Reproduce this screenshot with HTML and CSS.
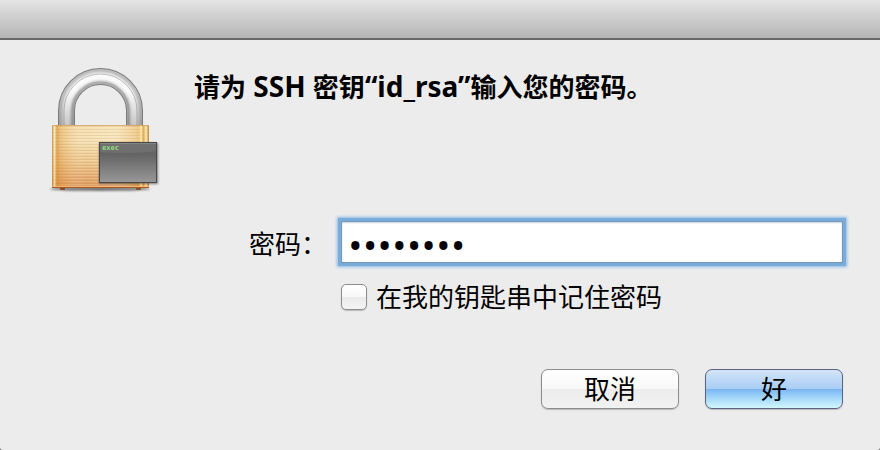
FILE: index.html
```html
<!DOCTYPE html>
<html lang="zh-CN">
<head>
<meta charset="utf-8">
<meta name="viewport" content="width=device-width, initial-scale=1">
<title>SSH 密钥</title>
<link rel="stylesheet" href="styles.css">
</head>
<body>
<main class="dialog">
  <header class="titlebar"></header>
  <form class="content">
    <svg class="lock" viewBox="0 0 130 140" aria-hidden="true">
      <defs>
        <linearGradient id="brass" x1="0" y1="0" x2="0" y2="1">
          <stop offset="0" stop-color="#f5dfae"/>
          <stop offset=".25" stop-color="#f4dfaf"/>
          <stop offset=".6" stop-color="#ecc083"/>
          <stop offset="1" stop-color="#d98b49"/>
        </linearGradient>
        <linearGradient id="edges">
          <stop offset="0" stop-color="#b97020" stop-opacity=".7"/>
          <stop offset=".025" stop-color="#fff0c0" stop-opacity=".7"/>
          <stop offset=".05" stop-color="#d38a35" stop-opacity=".65"/>
          <stop offset=".09" stop-color="#e09b47" stop-opacity=".4"/>
          <stop offset=".35" stop-color="#fff" stop-opacity=".08"/>
          <stop offset=".65" stop-color="#fff" stop-opacity=".2"/>
          <stop offset=".89" stop-color="#e5a348" stop-opacity=".35"/>
          <stop offset=".92" stop-color="#fff3bd" stop-opacity=".9"/>
          <stop offset=".94" stop-color="#d99336" stop-opacity=".7"/>
          <stop offset=".97" stop-color="#fff0b5" stop-opacity=".9"/>
          <stop offset="1" stop-color="#b86c23" stop-opacity=".8"/>
        </linearGradient>
        <linearGradient id="screen" x1="0" y1="0" x2="0" y2="1">
          <stop offset="0" stop-color="#686868"/>
          <stop offset=".3" stop-color="#646464"/>
          <stop offset="1" stop-color="#989898"/>
        </linearGradient>
        <linearGradient id="legs" x1="0" y1="0" x2="0" y2="1">
          <stop offset=".3" stop-color="#666" stop-opacity="0"/>
          <stop offset="1" stop-color="#666" stop-opacity=".35"/>
        </linearGradient>
        <pattern id="brushed" width="4" height="3" patternUnits="userSpaceOnUse">
          <path d="M0 .5H4" stroke="#ad6a20" stroke-opacity=".17"/>
          <path d="M0 1.5H4" stroke="#fff4cb" stroke-opacity=".2"/>
        </pattern>
        <filter id="soft" x="-20%" y="-200%" width="140%" height="500%"><feGaussianBlur stdDeviation="1.2"/></filter>
        <filter id="smooth"><feGaussianBlur stdDeviation="1"/></filter>
      </defs>
      <ellipse cx="60" cy="129" rx="50" ry="2" fill="#555" opacity=".8" filter="url(#soft)"/>
      <g fill="none">
        <path d="M26.500 66V50.500A34 34 0 0 1 94.500 50.500V66" stroke="#7d7d7d" stroke-width="17"/>
        <path d="M26.500 66V50.500A34 34 0 0 1 94.500 50.500V66" stroke="#bdbdbd" stroke-width="15"/>
        <path d="M26.500 66V50.500A34 34 0 0 1 94.500 50.500V66" stroke="#fafafa" stroke-width="8" filter="url(#smooth)"/>
        <path d="M24 65V50.500A36.500 36.500 0 0 1 97 50.500V65" stroke="#999" opacity=".6"/>
        <path d="M32.500 65V50.500A28 28 0 0 1 88.500 50.500V65" stroke="#9c9c9c" stroke-width="2" opacity=".6"/>
        <path d="M26.500 66V50.500A34 34 0 0 1 94.500 50.500V66" stroke="url(#legs)" stroke-width="16"/>
      </g>
      <rect x="20" y="127" width="5" height="3" rx="1" fill="#8c4d20"/>
      <rect x="96" y="127" width="5" height="3" rx="1" fill="#8c4d20"/>
      <rect x="12" y="65" width="97" height="63" rx="1" fill="url(#brass)"/>
      <rect x="12" y="65" width="97" height="63" fill="url(#brushed)"/>
      <rect x="12" y="65" width="97" height="63" rx="1" fill="url(#edges)"/>
      <path d="M13 65.500H108" stroke="#c8904a" opacity=".6"/>
      <path d="M12 126.500H109" stroke="#ffc079" opacity=".8"/>
      <path d="M12 127.500H109" stroke="#9c5826"/>
      <rect x="59" y="83" width="59" height="41" fill="#333" opacity=".6" filter="url(#smooth)"/>
      <rect x="59.500" y="82.500" width="57" height="40" fill="url(#screen)" stroke="#484848"/>
      <path d="M60 83H116V91Q88 95 60 92Z" fill="#888" opacity=".28"/>
      <path d="M60 83.500H116" stroke="#858585"/>
      <text class="lock-text" x="62" y="90">exec</text>
    </svg>
    <h1 class="message">请为<span class="latin"> SSH </span>密钥<span class="latin">“id_rsa”</span>输入您的密码。</h1>
    <label class="password-label" for="password">密码：</label>
    <input class="password" id="password" type="password" value="password" autocomplete="off">
    <div class="remember">
      <input class="checkbox" id="remember" type="checkbox">
      <label for="remember">在我的钥匙串中记住密码</label>
    </div>
    <div class="actions">
      <button class="button" type="button">取消</button>
      <button class="button primary" type="submit">好</button>
    </div>
  </form>
</main>
</body>
</html>
```
FILE: styles.css
```css
* {
  box-sizing: border-box;
}

body {
  margin: 0;
  background: #777;
  color: #000;
  font: 26px/36px "Open Sans", "Noto Sans CJK SC", sans-serif;
}

.dialog {
  min-height: 100vh;
  background: #ececec;
  border-radius: 0 0 3px 3px;
}

.titlebar {
  height: 40px;
  background: linear-gradient(#e4e4e4, #b5b5b5);
  border-bottom: 2px solid #686868;
}

.content {
  display: grid;
  grid-template-columns: 130px 143px 1fr;
  grid-template-rows: 140px auto auto auto;
  column-gap: 14px;
  padding: 20px 37px 40px 40px;
}

.lock {
  width: 130px;
  height: 140px;
}

.lock-text {
  fill: #92df80;
  font: bold 7px "DejaVu Sans Mono", monospace;
}

.message {
  grid-column: 2 / -1;
  margin: 8px 0 0 10px;
  font-size: 26px;
  font-weight: 700;
  line-height: 36px;
}

.latin {
  font-family: "Noto Sans", sans-serif;
  font-size: 28px;
}

.password-label {
  grid-column: 2;
  margin-top: 26px;
  text-align: right;
  white-space: nowrap;
}

.password {
  width: 100%;
  min-width: 0;
  height: 42px;
  margin-top: 21px;
  padding: 4px 6px 0;
  border: 1px solid #7597b9;
  outline: 0;
  background: #fff;
  box-shadow: 0 0 0 3px #79acdb, 0 0 3px 4px #8bbbe5, inset 0 1px 2px #c5d3df;
  color: #000;
  font: 39px/36px "Open Sans", sans-serif;
}

.remember {
  grid-column: 3;
  display: flex;
  align-items: center;
  gap: 9px;
  margin-top: 16px;
}

.checkbox {
  appearance: none;
  flex: none;
  width: 26px;
  height: 26px;
  margin: 0;
  border: 1px solid #8c8c8c;
  border-radius: 5px;
  background: linear-gradient(#fff, #f8f8f8 50%, #eaeaea 51%, #f4f4f4);
  box-shadow: 0 1px 1px #bbb;
}

.checkbox:checked {
  background: #73b5f2;
}

.actions {
  grid-column: 1 / -1;
  display: flex;
  justify-content: flex-end;
  gap: 26px;
  margin-top: 54px;
}

.button {
  width: 138px;
  height: 40px;
  padding: 0;
  border: 1px solid #8c8c8c;
  border-radius: 7px;
  background: linear-gradient(#fff, #f8f8f8 50%, #ececec 51%, #f2f2f2);
  box-shadow: 0 1px 1px #bbb;
  color: #000;
  font: inherit;
}

.primary {
  border-color: #5d6280;
  background: linear-gradient(#d3e4f8, #a9cef4 49%, #7ab5f1 50%, #a5d9f9 75%, #d2f7fd);
}
```
